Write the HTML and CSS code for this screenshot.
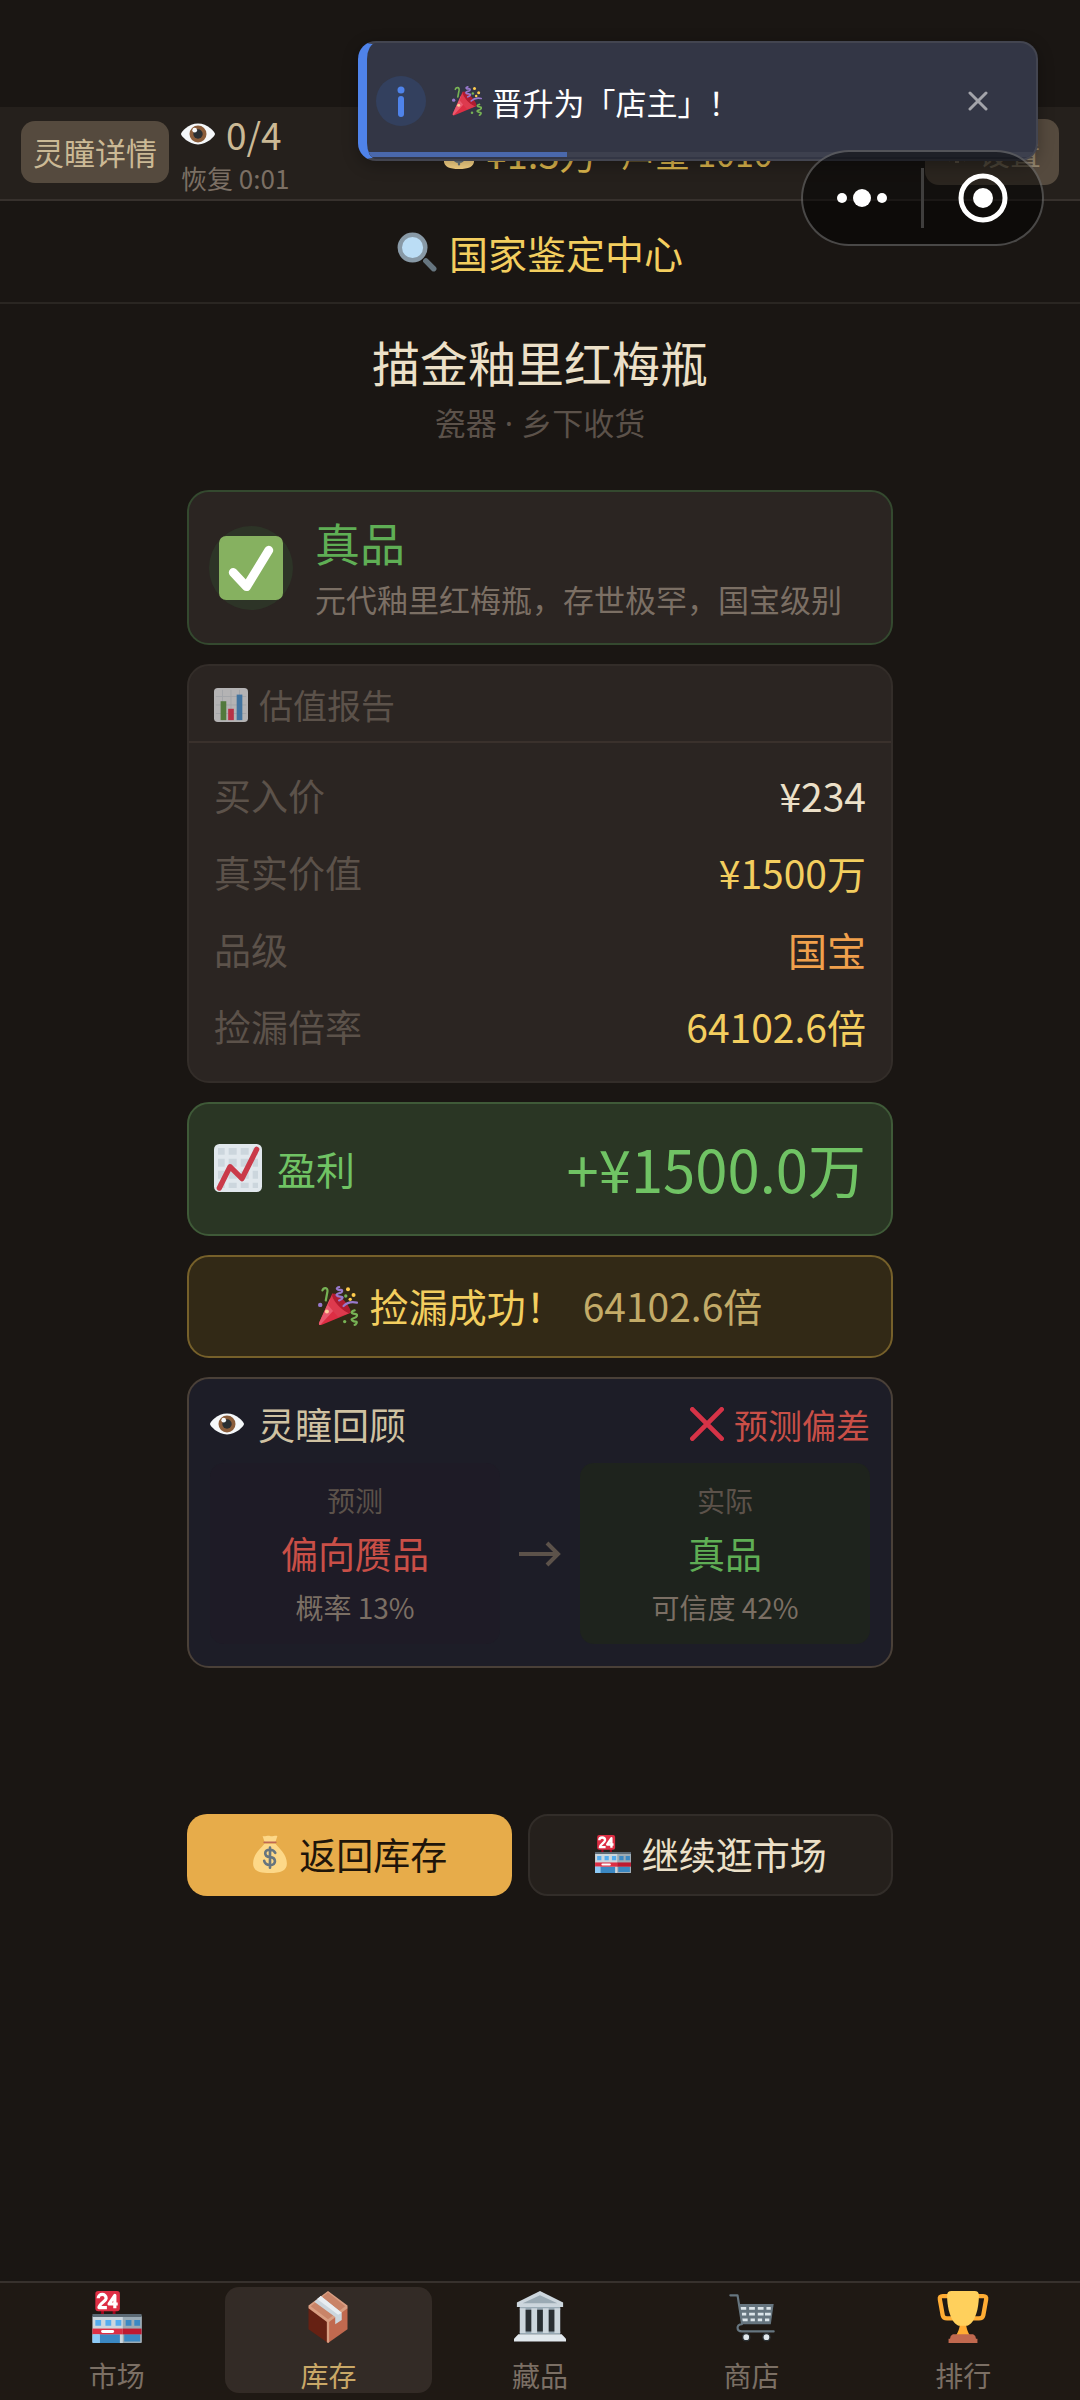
FILE: index.html
```html
<!DOCTYPE html>
<html lang="zh-CN">
<head>
    <meta charset="UTF-8">
    <meta name="viewport" content="width=device-width, initial-scale=1.0">
    <title>国家鉴定中心</title>
    <link rel="stylesheet" href="styles.css">
</head>
<body>
    <!-- Shared icons -->
    <svg class="sprite" aria-hidden="true">
        <symbol id="icon-eye" viewBox="0 0 36 36">
            <path fill="#f5f8fa" d="M18 7C8 7 0 16 0 18s8 11 18 11 18-9 18-11S28 7 18 7z"/>
            <circle fill="#8a5d3b" cx="18" cy="18" r="9"/>
            <circle fill="#292f33" cx="18" cy="18" r="5"/>
            <circle fill="#f5f8fa" cx="14.500" cy="14" r="2.500"/>
        </symbol>
        <symbol id="icon-party" viewBox="0 0 36 36">
            <path fill="#dd2e44" d="M13 6.500 1 33c-.6 1.500.5 2.600 2 2L29.500 24z"/>
            <path fill="#ea596e" d="M11 11 1 33c-.5 1.300 0 2.200 1 2.200L14 22z"/>
            <ellipse fill="#b01c30" cx="21" cy="15.500" rx="3.500" ry="11.500" transform="rotate(-43 21 15.500)"/>
            <path fill="#dd3a4e" d="M12.500 9c2 6 8 12.500 15 15.500L18 28 9 17z"/>
            <circle fill="#ffcc9b" cx="8" cy="23" r="1.800"/>
            <path fill="none" stroke="#77b255" stroke-width="2" stroke-linecap="round" d="M4 4c1-3 5-3 4.500 1L7 13"/>
            <path fill="none" stroke="#9879cc" stroke-width="2" stroke-linecap="round" d="M19 1c-4 1-1 3 1 2.500s3 2-1 3-2 3 1 3 3 2-1 3.500M23 18c3-3 8-4 12-3"/>
            <path fill="none" stroke="#77b255" stroke-width="2" stroke-linecap="round" d="M33 22c-4 1-3 3 0 3s3 3-1 4 0 3 2 3-0 3-1 3"/>
            <circle fill="#9879cc" cx="2" cy="17" r="2"/>
            <circle fill="#ffcc4d" cx="27" cy="3" r="1.800"/>
            <circle fill="#ffcc4d" cx="32" cy="8" r="1.800"/>
            <circle fill="#ffcc4d" cx="29" cy="12" r="1.500"/>
            <circle fill="#77b255" cx="25" cy="9" r="1.500"/>
            <circle fill="#77b255" cx="24" cy="32" r="1.500"/>
        </symbol>
        <symbol id="icon-bag" viewBox="0 0 36 36">
            <path fill="#fdd888" d="M11 1c2 1 5-1 7 0s5-1 7 0l-2 6H13zM13 8h10c4 5 11 10 11 19 0 7-6 9-16 9S2 34 2 27C2 18 9 13 13 8z"/>
            <path fill="none" stroke="#bf6952" stroke-width="1.500" stroke-linecap="round" d="M12.500 7h11"/>
            <path fill="none" stroke="#67757f" stroke-width="2.500" stroke-linecap="round" d="M23 17c-1-2-2.500-3-5-3-6 0-6 6.500 0 7s6.500 7.500 0 7.500c-3.500 0-5-1.500-5.500-4M18 12v19"/>
        </symbol>
        <symbol id="icon-store" viewBox="0 0 36 36">
            <path fill="#a0041e" d="M7 13h2v5H7zM15 13h2v5h-2z"/>
            <rect fill="#dd2e44" x="3" y="0" width="17" height="14" rx="2"/>
            <path fill="none" stroke="#fff" stroke-width="2.200" stroke-linejoin="round" d="M5 5c0-3.500 5.500-3.500 5.500 0 0 2-5 4-5 6.500H11M16.500 12V3L12.500 9h6"/>
            <rect fill="#ccd6dd" x="1" y="17" width="34" height="19" rx="1"/>
            <path fill="#9cabb5" d="M22 17h13v19H22z"/>
            <path fill="#5c6a75" d="M1 16h34v2H1z"/>
            <path fill="#55acee" d="M3 20h4v4H3zM10 20h4v4h-4zM17 20h4v4h-4z"/>
            <path fill="#3b88c3" d="M24 20h4v4h-4zM30 20h4v4h-4zM6 30h14v6H6zM23 30h11v5H23z"/>
            <path fill="#dd2e44" d="M1 26h21v4H1z"/>
            <path fill="#be1931" d="M22 26h13v4H22z"/>
            <path fill="#8ccaf7" d="M1 30h5v6H1z"/>
            <rect fill="#fff" x="7" y="27" width="9" height="2" rx="1"/>
        </symbol>
    </svg>

    <header class="topbar">
        <div class="topbar-left">
            <button type="button" class="chip">灵瞳详情</button>
            <div class="energy">
                <div class="energy-count"><svg class="icon-34"><use href="#icon-eye"/></svg>0/4</div>
                <div class="energy-timer">恢复 0:01</div>
            </div>
        </div>
        <div class="wallet">
            <span class="money"><svg class="icon-34"><use href="#icon-bag"/></svg>¥1.3万</span>
            <span class="fame">声望 1010</span>
        </div>
        <button type="button" class="chip chip-settings">
            <svg class="icon-28" viewBox="0 0 28 28"><circle cx="14" cy="14" r="7" fill="none" stroke="currentColor" stroke-width="4"/><path stroke="currentColor" stroke-width="4" d="M14 2v5M14 21v5M2 14h5M21 14h5M5 5l4 4M19 19l4 4M5 23l4-4M19 9l4-4"/></svg>
            设置
        </button>
    </header>

    <div class="page-title">
        <svg class="icon-40" viewBox="0 0 36 36">
            <path stroke="#66757f" stroke-width="5" stroke-linecap="round" d="M26 26l7 7"/>
            <circle cx="14" cy="14" r="11.500" fill="#bbddf5" stroke="#8899a6" stroke-width="4"/>
        </svg>
        <h1>国家鉴定中心</h1>
    </div>

    <main class="content">
        <h2 class="item-name">描金釉里红梅瓶</h2>
        <p class="item-meta">瓷器 · 乡下收货</p>

        <section class="card verdict">
            <div class="verdict-icon">
                <svg class="icon-64" viewBox="0 0 36 36">
                    <rect fill="#86b160" width="36" height="36" rx="4"/>
                    <path fill="none" stroke="#fff" stroke-width="5" stroke-linecap="round" stroke-linejoin="round" d="M8 20.500l7.500 8L28 8"/>
                </svg>
            </div>
            <div>
                <h3 class="verdict-title">真品</h3>
                <p class="verdict-desc">元代釉里红梅瓶，存世极罕，国宝级别</p>
            </div>
        </section>

        <section class="card report">
            <h3 class="report-title">
                <svg class="icon-34" viewBox="0 0 36 36">
                    <rect fill="#b4b3b4" width="36" height="36" rx="4"/>
                    <path stroke="#a3a5a9" stroke-width="1" d="M9 2v32M18 2v32M27 2v32M2 9h32M2 18h32M2 27h32"/>
                    <path fill="#52793c" d="M7 14h6v20H7z"/>
                    <path fill="#b83246" d="M15 22h6v12h-6z"/>
                    <path fill="#41739f" d="M24 7h6v27h-6z"/>
                </svg>
                估值报告
            </h3>
            <dl class="report-rows">
                <div class="row"><dt>买入价</dt><dd>¥234</dd></div>
                <div class="row"><dt>真实价值</dt><dd class="gold">¥1500万</dd></div>
                <div class="row"><dt>品级</dt><dd class="orange">国宝</dd></div>
                <div class="row"><dt>捡漏倍率</dt><dd class="gold">64102.6倍</dd></div>
            </dl>
        </section>

        <section class="card profit">
            <span class="profit-label">
                <svg class="icon-48" viewBox="0 0 36 36">
                    <rect fill="#e1e8ed" width="36" height="36" rx="4"/>
                    <path fill="#ccd6dd" d="M3 3h5v5H3zM11 3h6v5h-6zM20 3h6v5h-6zM29 3h4v5h-4zM3 11h5v6H3zM11 11h6v6h-6zM20 11h6v6h-6zM29 11h4v6h-4zM3 20h5v6H3zM11 20h6v6h-6zM20 20h6v6h-6zM29 20h4v6h-4zM3 29h5v4H3zM11 29h6v4h-6zM20 29h6v4h-6zM29 29h4v4h-4z"/>
                    <path fill="none" stroke="#ca3a49" stroke-width="4" stroke-linecap="round" stroke-linejoin="round" d="M4 33l8-16 9 9L32 4"/>
                </svg>
                盈利
            </span>
            <span class="profit-value">+¥1500.0万</span>
        </section>

        <section class="card bargain">
            <span class="bargain-label"><svg class="icon-40"><use href="#icon-party"/></svg>捡漏成功！</span>
            <span class="bargain-rate">64102.6倍</span>
        </section>

        <section class="card review">
            <div class="review-head">
                <h3 class="review-title"><svg class="icon-34"><use href="#icon-eye"/></svg>灵瞳回顾</h3>
                <span class="review-result">
                    <svg class="icon-34" viewBox="0 0 36 36"><path stroke="#d63347" stroke-width="5" stroke-linecap="round" d="M2.500 2.500l31 31M33.500 2.500l-31 31"/></svg>
                    预测偏差
                </span>
            </div>
            <div class="compare">
                <div class="compare-box predicted">
                    <span class="compare-label">预测</span>
                    <strong class="compare-value">偏向赝品</strong>
                    <span class="compare-note">概率 13%</span>
                </div>
                <svg class="arrow" viewBox="0 0 42 32"><path fill="none" stroke="currentColor" stroke-width="4" d="M0 16h39M28 5l11 11-11 11"/></svg>
                <div class="compare-box actual">
                    <span class="compare-label">实际</span>
                    <strong class="compare-value">真品</strong>
                    <span class="compare-note">可信度 42%</span>
                </div>
            </div>
        </section>

        <div class="actions">
            <button type="button" class="btn btn-primary"><svg class="icon-38"><use href="#icon-bag"/></svg>返回库存</button>
            <button type="button" class="btn btn-secondary"><svg class="icon-38"><use href="#icon-store"/></svg>继续逛市场</button>
        </div>
    </main>

    <nav class="tabbar">
        <a href="#market" class="tab">
            <svg class="icon-52"><use href="#icon-store"/></svg>
            市场
        </a>
        <a href="#stock" class="tab active">
            <svg class="icon-52" viewBox="0 0 36 36">
                <path fill="#662113" d="M4.500 11.500 18 20v16L4.500 26.500z"/>
                <path fill="#c1694f" d="M31.500 11.500 18 20v16l13.500-9.500z"/>
                <path fill="#d99e82" d="M18 0 4.500 10v2L18 22l13.500-10v-2z"/>
                <path fill="#c98468" d="M18 1 6 10.500 18 19.500l12-9z"/>
                <path fill="#ccd6dd" d="M13 3.500 8.500 7.500 23 18v5l4.500-3v-5z"/>
                <path fill="#e8eef2" d="M13 3.500 10.500 5.500 25 16.500l2.500-1.500z"/>
                <path fill="#d99e82" d="M17.200 21h1.600v14.500l-.8.5-.8-.5z"/>
            </svg>
            库存
        </a>
        <a href="#collection" class="tab">
            <svg class="icon-52" viewBox="0 0 36 36">
                <path fill="#292f33" d="M4 11h28v20H4z"/>
                <path fill="#ccd6dd" d="M18 0 2 8v3h32V8z"/>
                <path fill="#9aaab4" d="M18 3 6 8.500h24z"/>
                <path fill="#99aab5" d="M4 11h28v2H4zM4 28h28v2H4z"/>
                <path fill="#ccd6dd" d="M4 12h4v17H4zM12 12h4v17h-4zM20 12h4v17h-4zM28 12h4v17h-4z"/>
                <path fill="#e1e8ed" d="M3 30h30l3 3v2H0v-2z"/>
            </svg>
            藏品
        </a>
        <a href="#shop" class="tab">
            <svg class="icon-52" viewBox="0 0 36 36">
                <path fill="#66757f" d="M9 9h24l-2 14H11z"/>
                <path fill="#dce5ea" d="M10 11h4v2h-4zM16 11h4v2h-4zM22 11h4v2h-4zM28 11h3v2h-3zM11 15h3v2h-3zM16 15h4v2h-4zM22 15h4v2h-4zM27 15h4v2h-4zM11 19h4v2h-4zM17 19h3v2h-3zM22 19h3v2h-3zM27 19h3v2h-3z"/>
                <path fill="none" stroke="#66757f" stroke-width="1.500" stroke-linecap="round" stroke-linejoin="round" d="M3 3h5l3 19M11 23c-4 0-4 5 0 5h22"/>
                <circle cx="14" cy="32" r="2.500" fill="#e1e8ed" stroke="#292f33" stroke-width="1"/>
                <circle cx="28" cy="32" r="2.500" fill="#e1e8ed" stroke="#292f33" stroke-width="1"/>
            </svg>
            商店
        </a>
        <a href="#rank" class="tab">
            <svg class="icon-52" viewBox="0 0 36 36">
                <path fill="none" stroke="#ffac33" stroke-width="3" stroke-linejoin="round" d="M9 3.500H4Q1.500 3.500 2 6l2 11q.5 2 3 2h5M27 3.500h5Q34.500 3.500 34 6l-2 11q-.5 2-3 2h-5"/>
                <path fill="#ffac33" d="M16 20h4c0 5 1 8 3 11H13c2-3 3-6 3-11z"/>
                <path fill="#ffd05c" d="M10 0h16q3 0 3 3c0 12-4 20-8 21h-6C11 23 7 15 7 3q0-3 3-3z"/>
                <path fill="#c1694f" d="M11 30h14q2 1 2 3h1v3H8v-3h1q0-2 2-3z"/>
            </svg>
            排行
        </a>
    </nav>

    <div class="toast" role="status">
        <span class="toast-icon">
            <svg viewBox="0 0 36 36"><circle cx="18" cy="7" r="3.500" fill="currentColor"/><path stroke="currentColor" stroke-width="6" stroke-linecap="round" d="M18 16v15"/></svg>
        </span>
        <span class="toast-text"><svg class="icon-30"><use href="#icon-party"/></svg>晋升为「店主」！</span>
        <button type="button" class="toast-close" aria-label="关闭">
            <svg viewBox="0 0 20 20"><path stroke="currentColor" stroke-width="3" stroke-linecap="round" d="M2 2l16 16M18 2L2 18"/></svg>
        </button>
        <div class="toast-progress"><div class="toast-progress-bar"></div></div>
    </div>

    <!-- Mini program capsule -->
    <div class="capsule">
        <button type="button" aria-label="更多">
            <svg width="52" height="20" viewBox="0 0 52 20"><g fill="#fff"><circle cx="6" cy="10" r="5"/><circle cx="26" cy="10" r="9"/><circle cx="46" cy="10" r="5"/></g></svg>
        </button>
        <button type="button" aria-label="退出">
            <svg width="50" height="50" viewBox="0 0 50 50"><circle cx="25" cy="25" r="22" fill="none" stroke="#fff" stroke-width="5"/><circle cx="25" cy="25" r="10" fill="#fff"/></svg>
        </button>
    </div>
</body>
</html>
```
FILE: styles.css
```css
:root {
  --bg: #1a1613;
  --bar: #25201c;
  --card: #2b2522;
  --line: #37312d;
  --text: #ece0c8;
  --muted: #5c524a;
  --soft: #7b6f64;
  --gold: #f3ce5f;
  --green: #5fae55;
  --red: #c94f47;
}

* {
  box-sizing: border-box;
}

body {
  font-family: 'Noto Sans CJK SC', 'Noto Sans', sans-serif;
  background-color: var(--bg);
  color: var(--text);
  margin: 0;
  padding-top: 107px;
  min-height: 100vh;
  display: flex;
  flex-direction: column;
}

h1, h2, h3, p, dl, dd {
  margin: 0;
  font-weight: 400;
}

button {
  font-family: inherit;
  border: none;
  cursor: pointer;
}

svg {
  display: block;
  flex: none;
}

.sprite {
  position: absolute;
  width: 0;
  height: 0;
}

.icon-28 { width: 28px; height: 28px; }
.icon-30 { width: 30px; height: 30px; }
.icon-34 { width: 34px; height: 34px; }
.icon-38 { width: 38px; height: 38px; }
.icon-40 { width: 40px; height: 40px; }
.icon-48 { width: 48px; height: 48px; }
.icon-52 { width: 52px; height: 52px; }
.icon-64 { width: 64px; height: 64px; }

/* Top bar */
.topbar {
  display: flex;
  justify-content: space-between;
  align-items: center;
  height: 94px;
  padding: 0 21px 2px;
  background-color: var(--bar);
  border-bottom: 2px solid var(--line);
}

.topbar-left {
  display: flex;
  align-items: center;
  gap: 12px;
}

.chip {
  display: flex;
  align-items: center;
  gap: 8px;
  height: 62px;
  padding: 0 12px 2px;
  border-radius: 14px;
  background-color: #554a3e;
  color: #cbb995;
  font-size: 31px;
}

.chip-settings {
  height: 66px;
  padding: 0 18px 2px;
  color: #94866f;
}

.energy-count {
  display: flex;
  align-items: center;
  gap: 11px;
  font-size: 37px;
  line-height: 52px;
  color: #cbb995;
}

.energy-timer {
  font-size: 26px;
  line-height: 36px;
  color: var(--soft);
}

.wallet {
  display: flex;
  align-items: center;
  gap: 24px;
  color: #dcb64c;
}

.money {
  display: flex;
  align-items: center;
  gap: 10px;
  font-size: 38px;
}

.fame {
  font-size: 34px;
}

.page-title {
  display: flex;
  justify-content: center;
  align-items: center;
  gap: 12px;
  height: 103px;
  border-bottom: 2px solid #2a2622;
}

.page-title h1 {
  font-size: 39px;
  color: var(--gold);
}

/* Content */
.content {
  flex: 1;
  width: 100%;
  max-width: 706px;
  margin: 0 auto;
  padding-top: 29px;
}

.item-name {
  font-size: 48px;
  line-height: 56px;
  text-align: center;
}

/* Latin font first keeps the middle dot narrow */
.item-meta {
  margin: 14px 0 47px;
  font-family: 'Noto Sans', 'Noto Sans CJK SC', sans-serif;
  font-size: 31px;
  line-height: 40px;
  text-align: center;
  color: var(--muted);
}

.card {
  margin-bottom: 19px;
  border: 2px solid #332d29;
  border-radius: 22px;
  background-color: var(--card);
}

.verdict {
  display: flex;
  align-items: center;
  gap: 22px;
  padding: 20px;
  border-color: #34492f;
}

.verdict-icon {
  display: flex;
  align-items: center;
  justify-content: center;
  width: 84px;
  height: 84px;
  border-radius: 50%;
  background-color: #2d3427;
}

.verdict-title {
  font-size: 45px;
  line-height: 62px;
  color: var(--green);
}

.verdict-desc {
  font-size: 31px;
  line-height: 49px;
  color: var(--soft);
}

.report-title {
  display: flex;
  align-items: center;
  gap: 11px;
  height: 77px;
  padding: 2px 25px 0;
  border-bottom: 2px solid #3a312c;
  font-size: 34px;
  color: var(--muted);
}

.report-rows {
  padding: 14px 25px 16px;
}

.row {
  display: flex;
  justify-content: space-between;
  line-height: 77px;
}

.row dt {
  font-size: 37px;
  color: var(--muted);
}

.row dd {
  font-size: 39px;
}

.row .gold {
  color: var(--gold);
}

.row .orange {
  color: #f0a04c;
}

.profit {
  display: flex;
  justify-content: space-between;
  align-items: center;
  padding: 23px 25px 25px;
  border-color: #3f5a38;
  background-color: #2a3624;
  color: #70c364;
}

.profit-label {
  display: flex;
  align-items: center;
  gap: 15px;
  font-size: 39px;
}

.profit-value {
  font-size: 58px;
  line-height: 82px;
}

.bargain {
  display: flex;
  justify-content: center;
  align-items: center;
  gap: 18px;
  padding: 19px 21px 21px;
  border-color: #76602a;
  background-color: #322916;
  font-size: 39px;
  line-height: 59px;
  color: var(--gold);
}

.bargain-label {
  display: flex;
  align-items: center;
  gap: 12px;
}

.bargain-rate {
  color: #c3ab68;
}

.review {
  padding: 18px 21px 22px;
  border-color: #4a4038;
  background-color: #1d1d27;
}

.review-head {
  display: flex;
  justify-content: space-between;
  align-items: center;
  height: 54px;
  margin-bottom: 12px;
}

.review-title {
  display: flex;
  align-items: center;
  gap: 14px;
  font-size: 37px;
  color: #d0c2a2;
}

.review-result {
  display: flex;
  align-items: center;
  gap: 10px;
  font-size: 34px;
  color: var(--red);
}

.compare {
  display: grid;
  grid-template-columns: 1fr 42px 1fr;
  align-items: center;
  gap: 19px;
}

.compare-box {
  display: flex;
  flex-direction: column;
  align-items: center;
  padding: 16px 0 15px;
  border-radius: 14px;
}

.predicted {
  background-color: #1e1b26;
}

.actual {
  background-color: #1e231d;
}

.compare-label {
  font-size: 28px;
  line-height: 42px;
  color: var(--muted);
}

.compare-value {
  font-size: 37px;
  font-weight: 400;
  line-height: 64px;
}

.predicted .compare-value {
  color: var(--red);
}

.actual .compare-value {
  color: var(--green);
}

.compare-note {
  font-size: 28px;
  line-height: 44px;
  color: var(--soft);
}

.arrow {
  width: 42px;
  height: 32px;
  color: var(--muted);
}

.actions {
  display: flex;
  gap: 16px;
  margin-top: 146px;
}

.btn {
  display: flex;
  flex: 1 1 auto;
  justify-content: center;
  align-items: center;
  gap: 10px;
  height: 82px;
  padding: 0 6px 2px;
  border-radius: 20px;
  font-size: 37px;
}

.btn-primary {
  background-color: #e7ac4a;
  color: #1f150a;
}

.btn-secondary {
  border: 2px solid #322d29;
  background-color: var(--bar);
  color: var(--text);
}

/* Bottom tabs */
.tabbar {
  display: flex;
  padding: 4px 11px 7px;
  border-top: 2px solid var(--line);
  background-color: #1f1914;
}

.tab {
  display: flex;
  flex: 1;
  flex-direction: column;
  align-items: center;
  gap: 14px;
  margin: 0 2px;
  padding: 4px 0 0;
  border-radius: 14px;
  font-size: 28px;
  line-height: 36px;
  color: var(--soft);
  text-decoration: none;
}

.tab.active {
  background-color: #332b26;
  color: #c9a867;
}

/* Toast */
.toast {
  position: absolute;
  top: 41px;
  right: 42px;
  display: flex;
  align-items: center;
  width: 63%;
  height: 120px;
  padding: 0 48px 0 9px;
  border: 2px solid #434550;
  border-left: 9px solid #4f83ea;
  border-radius: 18px;
  background-color: #333645;
  box-shadow: 0 4px 16px rgba(0, 0, 0, 0.3);
  overflow: hidden;
}

.toast-icon {
  width: 50px;
  height: 50px;
  padding: 7px;
  border-radius: 50%;
  background-color: #33405e;
  color: #4f83ea;
}

.toast-text {
  display: flex;
  flex: 1;
  align-items: center;
  gap: 10px;
  margin-left: 26px;
  font-size: 31px;
  color: #fff;
}

.toast-close {
  width: 20px;
  height: 20px;
  padding: 0;
  background: none;
  color: #a3a4aa;
}

.toast-progress {
  position: absolute;
  left: 0;
  right: 0;
  bottom: 2px;
  height: 5px;
  background-color: #3d404e;
}

.toast-progress-bar {
  width: 30%;
  height: 100%;
  background-color: #4a68ab;
}

.capsule {
  position: absolute;
  top: 150px;
  right: 36px;
  display: flex;
  width: 243px;
  height: 96px;
  border: 2px solid rgba(255, 255, 255, 0.25);
  border-radius: 48px;
  background-color: rgba(0, 0, 0, 0.5);
}

.capsule button {
  display: flex;
  flex: 1;
  justify-content: center;
  align-items: center;
  padding: 0;
  background: none;
}

.capsule::before {
  content: '';
  order: 1;
  width: 3px;
  height: 60px;
  align-self: center;
  background-color: #3f3e3d;
}

.capsule button:last-child {
  order: 2;
}
```
